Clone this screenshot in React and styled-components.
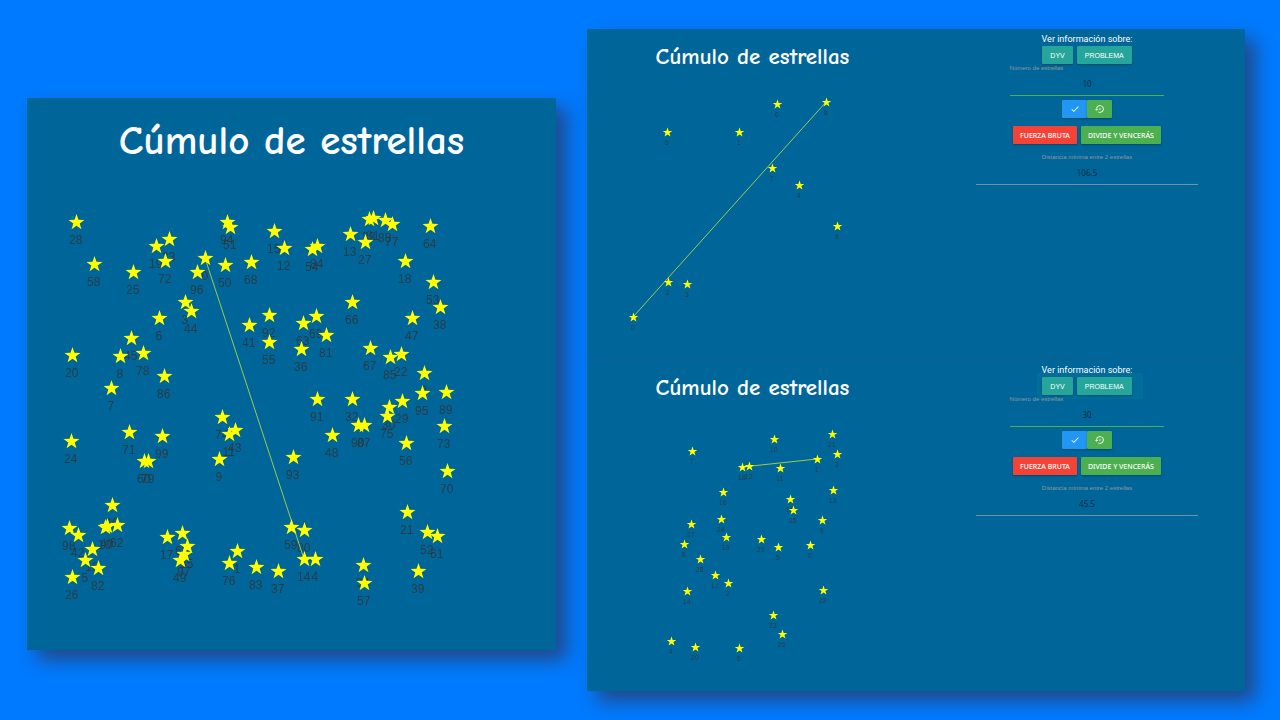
import React, { useId } from "react";
import styled, { createGlobalStyle } from "styled-components";
import { MdCheck, MdSettingsBackupRestore } from "react-icons/md";

const GlobalStyle = createGlobalStyle`
  * { box-sizing: border-box; }
  body {
    margin: 0;
    background: #007bff;
    font-family: Roboto, "Liberation Sans", sans-serif;
  }
`;

const Page = styled.main`
  display: grid;
  grid-template-columns: 529fr 658fr;
  gap: 31px;
  align-items: start;
  padding: 29px 35px 29px 27px;
`;

const Card = styled.section`
  min-width: 0;
  background: #006699;
  box-shadow: 10px 10px 18px rgba(45, 55, 95, 0.75);
`;

const LargeCard = styled(Card)`
  margin-top: 69px;
`;

const Title = styled.h1`
  margin: 0;
  padding-top: ${(p) => (p.$large ? 15 : 12)}px;
  color: #fff;
  font-family: "Comic Sans MS", "Comic Neue", Lato, sans-serif;
  font-size: ${(p) => (p.$large ? 41 : 23)}px;
  line-height: ${(p) => (p.$large ? 55 : 31)}px;
  font-weight: 700;
  text-align: center;
`;

const Panel = styled.div`
  display: grid;
  grid-template-columns: 331fr 316fr;
  column-gap: 11px;
  align-items: start;
  border-bottom: ${(p) => (p.$divided ? "1px solid #0d6091" : "0")};
`;

const Chart = styled.svg`
  display: block;
  width: 100%;
  height: auto;
`;

const Label = styled.text`
  fill: #333;
  fill-opacity: 0.8;
  font-family: "Liberation Sans", sans-serif;
  font-size: ${(p) => (p.$large ? 12 : 7)}px;
  text-anchor: middle;
`;

const Sidebar = styled.form`
  display: flex;
  flex-direction: column;
  align-items: center;
  padding-top: 4px;
`;

const Heading = styled.h2`
  z-index: 1;
  margin: 0 0 1px;
  color: #fff;
  font-size: 9px;
  line-height: 12px;
  font-weight: 400;
`;

const ButtonRow = styled.div`
  display: flex;
  gap: ${(p) => p.$gap || 0}px;
  margin-top: ${(p) => p.$top || 0}px;
  box-shadow: ${(p) => (p.$highlight ? "-1px 0 0 4px #006d9b, 7px 0 0 4px #006d9b" : "none")};
`;

const tones = { teal: "#26a69a", blue: "#2196f3", green: "#4caf50", red: "#f44336" };

const Button = styled.button`
  display: flex;
  align-items: center;
  justify-content: center;
  height: 18px;
  padding: 0 8px;
  border: 0;
  border-radius: 1px;
  background: ${(p) => tones[p.$tone]};
  box-shadow: 0 1px 2px rgba(0, 0, 0, 0.3);
  color: #fff;
  font-family: "Liberation Sans", sans-serif;
  font-size: 7px;
  white-space: nowrap;
  cursor: pointer;
`;

const ActionButton = styled(Button)`
  padding: 0 7px;
  font-family: "Noto Sans", sans-serif;
  font-weight: 500;
`;

const IconButton = styled(Button)`
  width: 25px;
  padding: 0;
  font-size: 10px;
`;

const Field = styled.div`
  display: flex;
  flex-direction: column;
  width: ${(p) => (p.$wide ? 70 : 49)}%;
  margin-top: ${(p) => (p.$wide ? 9 : 0)}px;
`;

const FieldLabel = styled.label`
  z-index: 1;
  color: #9e9e9e;
  opacity: 0.9;
  font-family: "Liberation Sans", sans-serif;
  font-size: 6px;
  line-height: 8px;
  text-align: ${(p) => (p.$center ? "center" : "left")};
`;

const TextInput = styled.input`
  width: 100%;
  height: 24px;
  padding: 0;
  border: 0;
  border-bottom: 1px solid ${(p) => (p.readOnly ? "#6f93a6" : "#4caf50")};
  outline: 0;
  background: transparent;
  color: #0b2c42;
  font-family: "Noto Sans", sans-serif;
  font-size: 8px;
  text-align: center;
`;

const starPoints = (x, y, r) =>
  Array.from({ length: 10 }, (_, i) => {
    const radius = i % 2 ? r * 0.4 : r;
    const angle = (Math.PI * i) / 5 - Math.PI / 2;
    return `${(x + 0.5 + radius * Math.cos(angle)).toFixed(2)},${(y + 0.5 + radius * Math.sin(angle)).toFixed(2)}`;
  }).join(" ");

function StarMap({ stars, line, viewBox, large }) {
  return (
    <Chart viewBox={viewBox} role="img" aria-label="Mapa de estrellas">
      {stars.map(([n, x, y]) => (
        <Label key={n} $large={large} x={x} y={y + (large ? 22 : 13)}>
          {n}
        </Label>
      ))}
      <line x1={line[0]} y1={line[1]} x2={line[2]} y2={line[3]} stroke="#9bcb4b" strokeWidth="1" />
      {stars.map(([n, x, y]) => (
        <polygon key={n} points={starPoints(x, y, large ? 8.4 : 5)} fill="#ff0" />
      ))}
    </Chart>
  );
}

function Controls({ count, distance, highlight }) {
  const id = useId();
  return (
    <Sidebar onSubmit={(e) => e.preventDefault()}>
      <Heading>Ver información sobre:</Heading>
      <ButtonRow $gap={4} $highlight={highlight}>
        <Button type="button" $tone="teal">DYV</Button>
        <Button type="button" $tone="teal">PROBLEMA</Button>
      </ButtonRow>
      <Field>
        <FieldLabel htmlFor={`${id}-count`}>Número de estrellas</FieldLabel>
        <TextInput id={`${id}-count`} defaultValue={count} />
      </Field>
      <ButtonRow $top={4}>
        <IconButton type="submit" $tone="blue" aria-label="Aceptar"><MdCheck /></IconButton>
        <IconButton type="button" $tone="green" aria-label="Reiniciar"><MdSettingsBackupRestore /></IconButton>
      </ButtonRow>
      <ButtonRow $gap={4} $top={8}>
        <ActionButton type="button" $tone="red">FUERZA BRUTA</ActionButton>
        <ActionButton type="button" $tone="green">DIVIDE Y VENCERÁS</ActionButton>
      </ButtonRow>
      <Field $wide>
        <FieldLabel $center htmlFor={`${id}-distance`}>Distancia mínima entre 2 estrellas</FieldLabel>
        <TextInput id={`${id}-distance`} readOnly value={distance} />
      </Field>
    </Sidebar>
  );
}

const hundred = [
  [28, 76, 222], [94, 227, 222], [51, 230, 227], [19, 156, 246], [23, 169, 239], [72, 165, 261],
  [0, 205, 258], [50, 225, 265], [68, 251, 262], [58, 94, 264], [25, 133, 272], [96, 197, 272],
  [3, 185, 302], [44, 191, 311], [6, 159, 318], [41, 249, 325], [45, 131, 338], [8, 120, 356],
  [78, 143, 353], [86, 164, 376], [20, 72, 355], [7, 111, 388], [15, 274, 231], [12, 284, 248],
  [54, 312, 249], [84, 317, 246], [13, 350, 234], [27, 365, 242], [33, 369, 219], [31, 373, 218],
  [88, 385, 220], [77, 392, 224], [64, 430, 226], [18, 405, 261], [53, 433, 282], [38, 440, 307],
  [66, 352, 302], [47, 412, 318], [92, 269, 315], [55, 269, 342], [63, 303, 323], [69, 316, 316],
  [81, 326, 335], [36, 301, 349], [67, 370, 348], [85, 390, 357], [22, 401, 354], [2, 424, 373],
  [95, 422, 393], [89, 446, 392], [24, 71, 441], [71, 129, 432], [99, 162, 436], [60, 144, 461],
  [79, 148, 461], [74, 222, 417], [43, 235, 430], [11, 229, 434], [9, 219, 459], [46, 112, 505],
  [98, 69, 528], [42, 78, 535], [10, 105, 527], [40, 107, 526], [62, 117, 525], [16, 92, 549],
  [5, 85, 560], [82, 98, 568], [26, 72, 577], [17, 167, 537], [65, 182, 533], [35, 187, 546],
  [97, 184, 554], [49, 180, 560], [1, 237, 551], [76, 229, 563], [91, 317, 399], [32, 352, 399],
  [90, 358, 425], [87, 364, 425], [48, 332, 435], [93, 293, 457], [30, 389, 407], [75, 387, 416],
  [29, 402, 401], [73, 444, 426], [56, 406, 443], [70, 447, 471], [21, 407, 512], [52, 427, 532],
  [61, 437, 536], [59, 291, 527], [80, 304, 530], [14, 304, 559], [4, 315, 559], [83, 256, 567],
  [37, 278, 571], [34, 363, 565], [57, 364, 583], [39, 418, 571],
];

const ten = [
  [8, 826, 102], [6, 777, 104], [5, 667, 132], [1, 739, 132], [7, 772, 168],
  [4, 799, 185], [9, 837, 226], [2, 668, 282], [3, 687, 284], [0, 633, 317],
];

const thirty = [
  [7, 692, 451], [10, 774, 439], [21, 832, 434], [3, 837, 454], [1, 817, 459], [18, 742, 467],
  [12, 749, 466], [11, 780, 468], [16, 723, 492], [15, 790, 499], [25, 793, 510], [13, 833, 490],
  [24, 721, 519], [9, 822, 520], [27, 691, 524], [8, 684, 544], [19, 726, 537], [29, 761, 539],
  [5, 778, 547], [0, 810, 545], [28, 700, 559], [17, 715, 575], [2, 728, 583], [14, 687, 591],
  [22, 823, 590], [23, 773, 615], [26, 782, 634], [4, 671, 641], [20, 695, 647], [6, 739, 648],
];

export default function App() {
  return (
    <>
      <GlobalStyle />
      <Page>
        <LargeCard>
          <Title $large>Cúmulo de estrellas</Title>
          <StarMap large stars={hundred} line={[205, 258, 304, 559]} viewBox="27 168 529 482" />
        </LargeCard>
        <Card>
          <Panel $divided>
            <div>
              <Title>Cúmulo de estrellas</Title>
              <StarMap stars={ten} line={[826, 102, 633, 317]} viewBox="587 72 331 287" />
            </div>
            <Controls count="10" distance="106.5" />
          </Panel>
          <Panel>
            <div>
              <Title>Cúmulo de estrellas</Title>
              <StarMap stars={thirty} line={[742, 467, 817, 459]} viewBox="587 403 331 288" />
            </div>
            <Controls count="30" distance="45.5" highlight />
          </Panel>
        </Card>
      </Page>
    </>
  );
}
